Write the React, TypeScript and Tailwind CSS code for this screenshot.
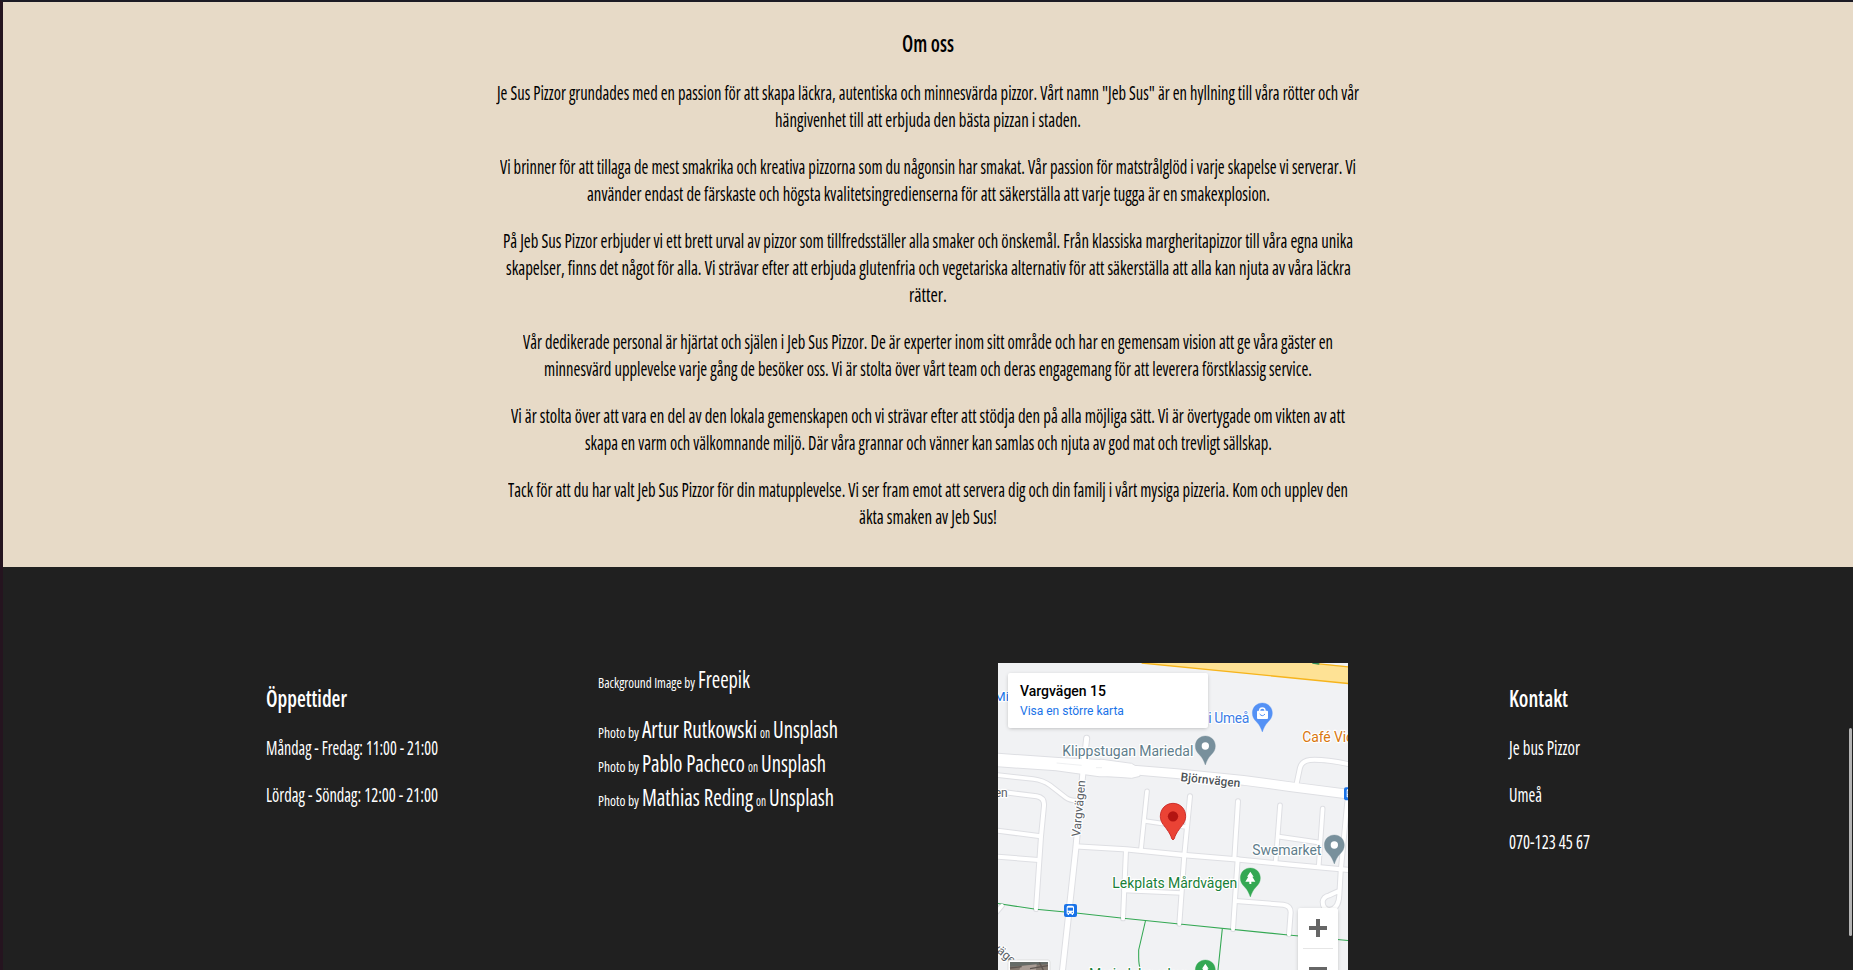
import { useLayoutEffect, useRef, useState, type ReactNode } from "react";

type FitProps = { width: number; className?: string; children: ReactNode };

/** Single line of condensed type, set to an exact measure. */
function Fit({ width, className = "", children }: FitProps) {
  const ref = useRef<HTMLSpanElement>(null);
  const [scale, setScale] = useState(1);

  useLayoutEffect(() => {
    if (ref.current) setScale(width / ref.current.getBoundingClientRect().width);
  }, [width]);

  return (
    <span className={`inline-block whitespace-nowrap text-left ${className}`} style={{ width }}>
      <span ref={ref} className="inline-block origin-left" style={{ transform: `scaleX(${scale})` }}>
        {children}
      </span>
    </span>
  );
}

const paragraphs: [string, number][][] = [
  [
    ['Je Sus Pizzor grundades med en passion för att skapa läckra, autentiska och minnesvärda pizzor. Vårt namn "Jeb Sus" är en hyllning till våra rötter och vår', 862],
    ["hängivenhet till att erbjuda den bästa pizzan i staden.", 306],
  ],
  [
    ["Vi brinner för att tillaga de mest smakrika och kreativa pizzorna som du någonsin har smakat. Vår passion för matstrålglöd i varje skapelse vi serverar. Vi", 856],
    ["använder endast de färskaste och högsta kvalitetsingredienserna för att säkerställa att varje tugga är en smakexplosion.", 683],
  ],
  [
    ["På Jeb Sus Pizzor erbjuder vi ett brett urval av pizzor som tillfredsställer alla smaker och önskemål. Från klassiska margheritapizzor till våra egna unika", 850],
    ["skapelser, finns det något för alla. Vi strävar efter att erbjuda glutenfria och vegetariska alternativ för att säkerställa att alla kan njuta av våra läckra", 845],
    ["rätter.", 38],
  ],
  [
    ["Vår dedikerade personal är hjärtat och själen i Jeb Sus Pizzor. De är experter inom sitt område och har en gemensam vision att ge våra gäster en", 810],
    ["minnesvärd upplevelse varje gång de besöker oss. Vi är stolta över vårt team och deras engagemang för att leverera förstklassig service.", 768],
  ],
  [
    ["Vi är stolta över att vara en del av den lokala gemenskapen och vi strävar efter att stödja den på alla möjliga sätt. Vi är övertygade om vikten av att", 834],
    ["skapa en varm och välkomnande miljö. Där våra grannar och vänner kan samlas och njuta av god mat och trevligt sällskap.", 687],
  ],
  [
    ["Tack för att du har valt Jeb Sus Pizzor för din matupplevelse. Vi ser fram emot att servera dig och din familj i vårt mysiga pizzeria. Kom och upplev den", 840],
    ["äkta smaken av Jeb Sus!", 138],
  ],
];

const credits: { name: string; nameWidth: number; siteWidth: number }[] = [
  { name: "Artur Rutkowski", nameWidth: 115, siteWidth: 65 },
  { name: "Pablo Pacheco", nameWidth: 103, siteWidth: 65 },
  { name: "Mathias Reding", nameWidth: 111, siteWidth: 65 },
];

const roads: { d: string; w: number }[] = [
  { d: "M0 308 L205 322 L330 328 L430 345 L560 356 L760 376 L900 395 L1080 418", w: 26 },
  { d: "M0 318 L200 332 L330 350 L430 350", w: 28 },
  { d: "M0 358 L130 372 Q160 376 180 391 L228 428 Q240 437 262 437", w: 11 },
  { d: "M40 411 L140 424 Q164 428 162 452 L153 545 L138 762", w: 12 },
  { d: "M0 524 L152 544", w: 12 },
  { d: "M0 603 L146 615", w: 12 },
  { d: "M290 250 L279 350 L258 575 L238 760 L216 960", w: 15 },
  { d: "M258 574 L410 583 L580 600 L740 613 L900 629 L1080 645", w: 13 },
  { d: "M471 409 L453 582", w: 11 },
  { d: "M465 498 L588 516", w: 11 },
  { d: "M600 424 L583 600 L568 806", w: 12 },
  { d: "M744 439 L733 610", w: 12 },
  { d: "M743 613 L729 822", w: 12 },
  { d: "M408 585 L399 790", w: 12 },
  { d: "M402 706 L574 714", w: 11 },
  { d: "M870 451 L857 620", w: 11 },
  { d: "M998 461 L986 636", w: 11 },
  { d: "M866 545 L990 563", w: 11 },
  { d: "M1072 440 L1052 650 L1048 720 Q1046 762 1018 765 Q998 762 998 740 Q1000 725 1018 721 L1046 708", w: 12 },
  { d: "M737 738 L880 749 Q902 752 902 772 L897 838", w: 12 },
  { d: "M918 395 L930 338 Q935 318 960 315 Q1000 312 1080 328", w: 12 },
  { d: "M36 752 L14 778", w: 11 },
];

function Pin({ x, y, color, children }: { x: number; y: number; color: string; children?: ReactNode }) {
  return (
    <g transform={`translate(${x} ${y})`}>
      <path
        d="M0 -30 C-17 -30 -30 -17 -30 0 C-30 12 -25 19 -17 27 C-8 36 -4 46 0 57 C4 46 8 36 17 27 C25 19 30 12 30 0 C30 -17 17 -30 0 -30Z"
        fill={color}
        stroke={color}
        strokeOpacity=".35"
        strokeWidth="3"
      />
      {children}
    </g>
  );
}

function TreePin({ x, y }: { x: number; y: number }) {
  return (
    <Pin x={x} y={y} color="#34a853">
      <path d="M0 -19 L10 -4 H6 L15 11 H3 V18 H-3 V11 H-15 L-6 -4 H-10Z" fill="#fff" />
    </Pin>
  );
}

function BusStop({ x, y }: { x: number; y: number }) {
  return (
    <g transform={`translate(${x} ${y})`}>
      <rect x="-19" y="-19" width="39" height="39" rx="6" fill="#1a73e8" />
      <path d="M-11 -9 Q-11 -14 -6 -14 H6 Q11 -14 11 -9 V10 H8 V14 H4 V10 H-4 V14 H-8 V10 H-11Z" fill="#fff" />
      <rect x="-8" y="-8" width="16" height="9" fill="#1a73e8" />
      <circle cx="-6" cy="6" r="2" fill="#1a73e8" />
      <circle cx="6" cy="6" r="2" fill="#1a73e8" />
    </g>
  );
}

function MapDrawing() {
  const halo = { stroke: "#fff", strokeWidth: 7, strokeLinejoin: "round", paintOrder: "stroke" } as const;
  return (
    <svg className="block h-[307px] w-[350px]" viewBox="24 24 1050 921" fontFamily="Roboto, sans-serif">
      <rect x="24" y="24" width="1050" height="921" fill="#f1f2f4" />
      <path d="M450 24 L1080 86 V34 L970 24Z" fill="#fee295" />
      <path d="M455 24 L1080 86 M980 26 L1080 36" stroke="#f6b41c" strokeWidth="4" fill="none" />
      <path d="M967 24 L988 27" stroke="#2f8f5b" strokeWidth="4" />

      <g fill="none" strokeLinecap="round" strokeLinejoin="round">
        {roads.map((r) => (
          <path key={r.d} d={r.d} stroke="#dedfe3" strokeWidth={r.w + 6} />
        ))}
      </g>
      <path d="M330 312 L425 325 L450 340 L450 364 L425 370 L330 363Z" fill="#fff" stroke="#dedfe3" strokeWidth="3" />
      <path d="M20 745 L138 763 L258 774 L400 790 L568 807 L895 840 L1080 857" stroke="#34a853" strokeWidth="3.2" fill="none" />
      <path d="M467 795 L446 885 V905 Q446 930 452 945 M697 821 L684 945" stroke="#34a853" strokeWidth="3.2" fill="none" />
      <g fill="none" stroke="#fff" strokeLinecap="round" strokeLinejoin="round">
        {roads.map((r) => (
          <path key={r.d} d={r.d} strokeWidth={r.w} />
        ))}
      </g>
      <path d="M200 324 L275 331 M318 338 L336 338" stroke="#e6e7ea" strokeWidth="2" />

      <g fontSize="42">
        <text x="12" y="137" fontSize="40" fill="#1a73e8" {...halo}>Mic</text>
        <text x="655" y="204" textLength="123" fill="#3c7de6" {...halo}>i Umeå</text>
        <text x="937" y="261" textLength="153" fill="#d9770f" {...halo}>Café Vic</text>
        <text x="217" y="304" textLength="393" fill="#607d8b" {...halo}>Klippstugan Mariedal</text>
        <text x="787" y="600" textLength="207" fill="#607d8b" {...halo}>Swemarket</text>
        <text x="367" y="700" textLength="375" fill="#188038" {...halo}>Lekplats Mårdvägen</text>
        <text x="297" y="973" textLength="300" fill="#188038" {...halo}>Mariedalsparken</text>
      </g>
      <g fontSize="36" fill="#5b6166">
        <text transform="translate(571 378) rotate(6)" textLength="180" fontWeight="500" fill="#4d5256" {...halo}>Björnvägen</text>
        <text transform="translate(270 546) rotate(-84.5)" textLength="170" {...halo}>Vargvägen</text>
        <text x="14" y="426" {...halo}>en</text>
        <text transform="translate(6 880) rotate(40)" {...halo}>vägen</text>
      </g>

      <BusStop x={241} y={766} />
      <BusStop x={1081} y={416} />

      <Pin x={817} y={174} color="#5491f5">
        <rect x="-16" y="-7" width="33" height="25" rx="3" fill="#fff" />
        <path d="M-8 -6 V-8 Q-8 -15 0 -15 Q8 -15 8 -8 V-6" fill="none" stroke="#fff" strokeWidth="4" />
        <path d="M-8 3 Q0 13 8 3" fill="none" stroke="#5491f5" strokeWidth="3" />
      </Pin>
      <Pin x={646} y={273} color="#78909c">
        <circle r="11" fill="#fff" />
      </Pin>
      <Pin x={1033} y={570} color="#78909c">
        <circle r="11" fill="#fff" />
      </Pin>
      <TreePin x={781} y={669} />
      <TreePin x={646} y={945} />

      <path
        d="M549 445 C527 445 511 462 511 484 C511 500 520 509 529 521 C538 533 543 542 545 551 Q549 558 553 551 C555 542 560 533 569 521 C578 509 587 500 587 484 C587 462 571 445 549 445Z"
        fill="#ea4335"
        stroke="#c5221f"
        strokeWidth="2.5"
      />
      <circle cx="549" cy="484" r="15.5" fill="#b31412" />

      <rect x="54" y="915" width="126" height="40" rx="6" fill="#fff" stroke="#d4d4d4" strokeWidth="2" />
      <rect x="60" y="921" width="114" height="34" fill="#85796f" />
      <path d="M60 921 H174 V928 L60 935Z" fill="#666b67" />
      <path d="M92 933 L140 928 L138 945 H88Z" fill="#a99c94" />
      <path d="M60 939 L95 935 M120 941 L174 932 M148 922 L160 945" stroke="#5e5550" strokeWidth="4" />
    </svg>
  );
}

function LocationMap() {
  return (
    <div className="relative h-[307px] w-[350px] overflow-hidden font-[Roboto,sans-serif] [font-stretch:100%]">
      <MapDrawing />
      <div className="absolute left-[10px] top-[10px] h-[55px] w-[200px] rounded-[2px] bg-white pl-3 pt-[9px] shadow-[0_1px_4px_-1px_rgba(0,0,0,0.3)]">
        <div className="text-[14px] font-medium leading-[18px] text-black">Vargvägen 15</div>
        <div className="mt-[3px] text-[12px] leading-[16px] text-[#1a73e8]">Visa en större karta</div>
      </div>
      <div className="absolute left-[300px] top-[245px] flex h-[81px] w-10 flex-col items-center rounded-[2px] bg-white shadow-[0_1px_4px_-1px_rgba(0,0,0,0.3)]">
        <svg className="h-10 w-10" viewBox="0 0 40 40">
          <path d="M18 11h4v7h7v4h-7v7h-4v-7h-7v-4h7z" fill="#666" />
        </svg>
        <div className="h-px w-[30px] bg-[#e6e6e6]" />
        <svg className="h-10 w-10" viewBox="0 0 40 40">
          <path d="M11 18h18v4H11z" fill="#666" />
        </svg>
      </div>
    </div>
  );
}

export default function App() {
  return (
    <div className="relative flex h-[970px] w-full flex-col overflow-hidden border-l-[3px] border-t-2 border-l-[#25141f] border-t-[#1c1a24] bg-[#202020] font-['Open_Sans',sans-serif] [font-stretch:75%]">
      <section className="h-[565px] shrink-0 bg-[#e7dac7] pt-6 text-center text-black">
        <h2 className="h-[33px] text-2xl font-semibold leading-[33px]">
          <Fit width={52}>Om oss</Fit>
        </h2>
        {paragraphs.map((lines, i) => (
          <p key={i} className="mt-5 text-xl leading-[27px]">
            {lines.map(([text, width]) => (
              <span key={text} className="flex h-[27px] justify-center">
                <Fit width={width}>{text}</Fit>
              </span>
            ))}
          </p>
        ))}
      </section>

      <footer className="grid grow grid-cols-[332px_400px_511px_1fr] pl-[263px] text-xl leading-[27px] text-white">
        <div className="flex flex-col gap-5 pt-[114px]">
          <h3 className="h-[33px] text-2xl font-semibold leading-[33px]">
            <Fit width={81}>Öppettider</Fit>
          </h3>
          <p className="h-[27px]"><Fit width={172}>Måndag - Fredag: 11:00 - 21:00</Fit></p>
          <p className="h-[27px]"><Fit width={172}>Lördag - Söndag: 12:00 - 21:00</Fit></p>
        </div>

        <div className="flex flex-col pt-[95px] text-[15px] leading-[34px]">
          <p className="mb-4 flex h-[34px] items-baseline gap-[3px]">
            <Fit width={97}>Background Image by</Fit>
            <Fit width={52} className="text-2xl leading-[34px]">Freepik</Fit>
          </p>
          {credits.map((c) => (
            <p key={c.name} className="flex h-[34px] items-baseline gap-[3px]">
              <Fit width={41}>Photo by</Fit>
              <Fit width={c.nameWidth} className="text-2xl leading-[34px]">{c.name}</Fit>
              <Fit width={10}>on</Fit>
              <Fit width={c.siteWidth} className="text-2xl leading-[34px]">Unsplash</Fit>
            </p>
          ))}
        </div>

        <div className="pt-24">
          <LocationMap />
        </div>

        <div className="flex flex-col gap-5 pt-[114px]">
          <h3 className="h-[33px] text-2xl font-semibold leading-[33px]">
            <Fit width={59}>Kontakt</Fit>
          </h3>
          <p className="h-[27px]"><Fit width={71}>Je bus Pizzor</Fit></p>
          <p className="h-[27px]"><Fit width={33}>Umeå</Fit></p>
          <p className="h-[27px]"><Fit width={81}>070-123 45 67</Fit></p>
        </div>
      </footer>

      <div className="absolute right-px top-[726px] h-[208px] w-[3px] rounded-full bg-[#b4b4b4]" />
    </div>
  );
}
